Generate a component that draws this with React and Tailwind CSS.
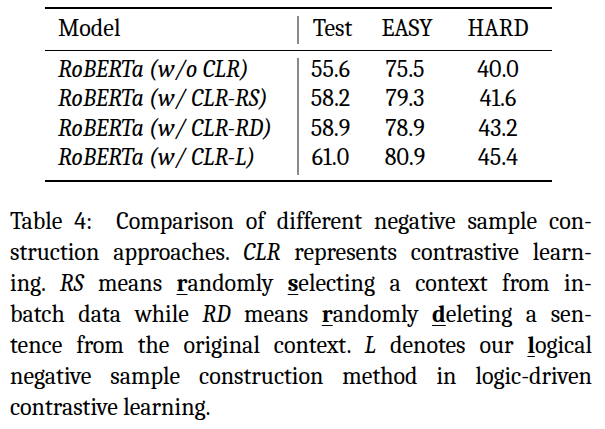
export default function App() {
  const rows = [
    ['RoBERTa (w/o CLR)', '55.6', '75.5', '40.0'],
    ['RoBERTa (w/ CLR-RS)', '58.2', '79.3', '41.6'],
    ['RoBERTa (w/ CLR-RD)', '58.9', '78.9', '43.2'],
    ['RoBERTa (w/ CLR-L)', '61.0', '80.9', '45.4'],
  ]

  const Key = ({ children }) => (
    <b className="font-bold underline decoration-1 underline-offset-[3px]">{children}</b>
  )

  const justified = 'text-justify [text-align-last:justify]'

  return (
    <div className="w-[605px] h-[429px] bg-white text-black pt-[7px] overflow-hidden">
      {/* table */}
      <div className="ml-[45px] w-[507px] text-[24px] font-serif font-['Times_New_Roman']">
        <div className="h-[2px] bg-black" />

        <div className="flex leading-[29.5px]">
          <div className="w-[252px] pl-[13px] pt-[5px] pb-[6px]">Model</div>
          <div className="w-[2px] bg-[#8a8a8a] mt-[7px] mb-[6px]" />
          <div className="w-[67px] text-center pt-[5px]">Test</div>
          <div className="w-[82px] text-center pt-[5px]">EASY</div>
          <div className="w-[100px] text-center pt-[5px]">HARD</div>
        </div>

        <div className="h-px bg-black" />

        <div className="flex leading-[29.5px]">
          <div className="w-[252px] pl-[13px] pt-[4px] pb-[7px] italic">
            {rows.map((r) => (
              <div key={r[0]}>{r[0]}</div>
            ))}
          </div>
          <div className="w-[2px] bg-[#8a8a8a] mt-[7px] mb-[5px]" />
          {[1, 2, 3].map((c) => (
            <div
              key={c}
              className={
                c === 1
                  ? 'w-[63px] text-center pt-[4px]'
                  : c === 2
                  ? 'w-[86px] text-center pt-[4px]'
                  : 'w-[100px] text-center pt-[4px]'
              }
            >
              {rows.map((r) => (
                <div key={r[0]}>{r[c]}</div>
              ))}
            </div>
          ))}
        </div>

        <div className="h-[2px] bg-black" />
      </div>

      {/* caption */}
      <div className="mt-[24px] ml-[10px] w-[582px] text-[24px] leading-[31px] font-serif font-['Times_New_Roman']">
        <div className={justified}>
          Table 4:&nbsp; Comparison of different negative sample con-
        </div>
        <div className={justified}>
          struction approaches. <i>CLR</i> represents contrastive learn-
        </div>
        <div className={justified}>
          ing. <i>RS</i> means <Key>r</Key>andomly <Key>s</Key>electing a context from in-
        </div>
        <div className={justified}>
          batch data while <i>RD</i> means <Key>r</Key>andomly <Key>d</Key>eleting a sen-
        </div>
        <div className={justified}>
          tence from the original context. <i>L</i> denotes our <Key>l</Key>ogical
        </div>
        <div className={justified}>
          negative sample construction method in logic-driven
        </div>
        <div>contrastive learning.</div>
      </div>
    </div>
  )
}
